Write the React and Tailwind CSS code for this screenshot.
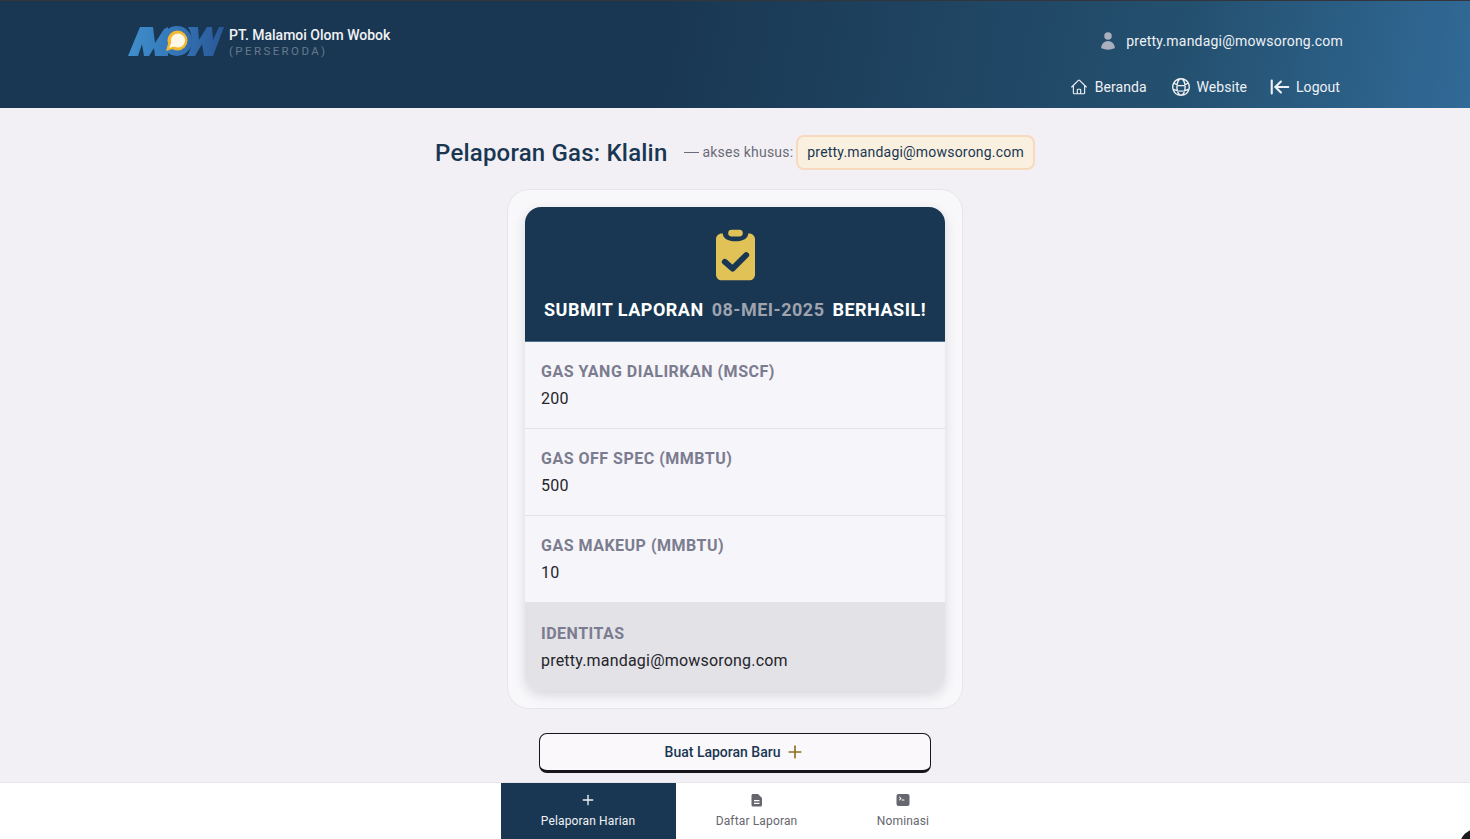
import { ArrowLeftToLine, Plus } from 'lucide-react';
import { HiUser, HiOutlineHome, HiOutlineGlobeAlt, HiCommandLine } from 'react-icons/hi2';

const FIELDS = [
  { label: 'GAS YANG DIALIRKAN (MSCF)', value: '200' },
  { label: 'GAS OFF SPEC (MMBTU)', value: '500' },
  { label: 'GAS MAKEUP (MMBTU)', value: '10' },
];

function MowLogo() {
  return (
    <svg width="96" height="30" viewBox="0 0 96 30" className="shrink-0">
      <defs>
        <linearGradient id="mow" gradientUnits="userSpaceOnUse" x1="0" x2="96" y1="0" y2="0">
          <stop offset="0" stopColor="#3f8fcb" />
          <stop offset="0.5" stopColor="#3476b8" />
          <stop offset="1" stopColor="#2a5796" />
        </linearGradient>
      </defs>
      <path fill="url(#mow)" d="M0 30 L12 1 L25 1 L27 17 L36 3 L40 1 L40 30 L27 30 L26 22 L21 30 L16 30 L14 18 L10 30 Z" />
      <circle cx="49" cy="15" r="15" fill="url(#mow)" />
      <path fill="url(#mow)" d="M60 1 L70 1 L71 14 L79 1 L84 1 L85 14 L91 1 L96 1 L85 30 L76 30 L74 18 L67 30 L59 30 C65 22 65 8 60 1 Z" />
      <circle cx="49.5" cy="14.5" r="10" fill="#f5b82e" />
      <path fill="#f5b82e" d="M38 25 L41 14 L48 22 Z" />
      <circle cx="50" cy="14.5" r="7" fill="#fdf8ea" />
      <path fill="#fdf8ea" d="M41 22 L44 15 L48 20 Z" />
    </svg>
  );
}

function ClipboardCheck() {
  return (
    <svg width="39" height="52" viewBox="0 0 40 52">
      <rect x="12.5" y="0" width="15" height="7" rx="3.5" fill="#e0c257" />
      <path
        fill="#e0c257"
        d="M6 4 H7 C7 9 12 12 20 12 C28 12 33 9 33 4 H34 C37.5 4 40 6.5 40 10 V46 C40 49.5 37.5 52 34 52 H6 C2.5 52 0 49.5 0 46 V10 C0 6.5 2.5 4 6 4 Z"
      />
      <path d="M9 33 L17 40 L31 26" fill="none" stroke="#193752" strokeWidth="6" strokeLinecap="round" strokeLinejoin="round" />
    </svg>
  );
}

function DocIcon() {
  return (
    <svg width="16" height="16" viewBox="0 0 16 16">
      <path
        fill="currentColor"
        fillRule="evenodd"
        d="M4 2 H9 L13 6 V13 C13 13.8 12.4 14.5 11.5 14.5 H4 C3.2 14.5 2.5 13.8 2.5 13 V3.5 C2.5 2.7 3.2 2 4 2 Z M5 8 V9.2 H10.5 V8 Z M5 10.7 V11.9 H10.5 V10.7 Z"
      />
    </svg>
  );
}

export default function App() {
  return (
    <div className="relative h-screen flex flex-col overflow-hidden bg-[#f2f0f4] font-['Roboto',sans-serif]">
      <header className="h-[108px] shrink-0 border-t border-[#33353a] bg-[linear-gradient(100deg,#193752_0%,#193752_45%,#24506f_80%,#316a97_100%)] pl-[128px] pr-[127px] flex justify-between text-white">
        <div className="flex items-start pt-[25px] gap-[5px]">
          <MowLogo />
          <div className="pt-[1px]">
            <div className="text-sm font-medium leading-[17px] text-[#f1f2f5]">PT. Malamoi Olom Wobok</div>
            <div className="text-[11.5px] leading-[14px] tracking-[2.4px] text-[#667a8c]">(PERSERODA)</div>
          </div>
        </div>
        <div className="flex flex-col items-end pt-[30px]">
          <div className="flex items-center gap-[8px] text-sm leading-[20px] tracking-[0.2px] text-[#eef1f5]">
            <HiUser className="w-[20px] h-[20px] text-[#a9afbd]" />
            pretty.mandagi@mowsorong.com
          </div>
          <nav className="flex items-center gap-6 mt-[25px] mr-[3px] text-sm leading-[22px] tracking-[0.05px] text-[#eef1f5]">
            <a className="flex items-center gap-[7px] -mr-[1px]"><HiOutlineHome className="w-[18px] h-[18px]" />Beranda</a>
            <a className="flex items-center gap-[5px]"><HiOutlineGlobeAlt className="w-[22px] h-[22px] stroke-[1.5]" />Website</a>
            <a className="flex items-center gap-[5px]"><ArrowLeftToLine className="w-[22px] h-[22px] -ml-[2px]" strokeWidth={2.3} />Logout</a>
          </nav>
        </div>
      </header>

      <main className="flex-1 min-h-0 flex flex-col items-center pt-[27px]">
        <div className="flex items-center h-[35px]">
          <h1 className="text-2xl font-medium leading-[33px] tracking-[0.2px] text-[#193752] mr-[16px] pt-[2px]">Pelaporan Gas: Klalin</h1>
          <span className="text-sm text-[#6b6c78] mr-[3px] tracking-[0.2px] pb-[2px]">
            <span className="inline-block w-[15px] h-px bg-[#6b6c78] align-middle mr-[4px]" />
            akses khusus:
          </span>
          <span className="h-[35px] flex items-center px-[9px] pb-[2px] rounded-lg border-2 border-[#f7d9bd] bg-[#faf0df] text-sm text-[#193752] tracking-[0.2px]">
            pretty.mandagi@mowsorong.com
          </span>
        </div>

        <div className="mt-[19px] w-[456px] rounded-[22px] border border-[#e6e5ea] bg-[#f8f7fa] p-[17px]">
          <div className="rounded-2xl overflow-hidden shadow-[0_4px_12px_rgba(30,30,50,0.14)] bg-[#f6f5f9]">
            <div className="h-[135px] bg-[#193752] border-b border-[#50708c] flex flex-col items-center pt-[22px]">
              <ClipboardCheck />
              <div className="mt-[17px] flex gap-2 text-lg font-bold leading-[24px] tracking-[0.5px] text-white">
                <span>SUBMIT LAPORAN</span>
                <span className="text-[#9ea3ae]">08-MEI-2025</span>
                <span>BERHASIL!</span>
              </div>
            </div>
            {FIELDS.map(f => (
              <div key={f.label} className="h-[87px] border-b border-[#e2e2e8] px-4 pt-[19px]">
                <div className="text-base font-bold leading-[22px] tracking-[0.5px] text-[#7b7c8f]">{f.label}</div>
                <div className="mt-[5px] text-base leading-[22px] tracking-[0.2px] text-[#25252b]">{f.value}</div>
              </div>
            ))}
            <div className="h-[89px] -mt-px bg-[#e2e2e7] px-4 pt-[21px]">
              <div className="text-base font-bold leading-[22px] tracking-[0.5px] text-[#7b7c8f]">IDENTITAS</div>
              <div className="mt-[5px] text-base leading-[22px] tracking-[0.2px] text-[#25252b]">pretty.mandagi@mowsorong.com</div>
            </div>
          </div>
        </div>

        <button className="mt-[24px] w-[392px] h-[40px] shrink-0 rounded-lg border border-[#15151a] border-b-[3px] bg-[#faf8fb] flex items-center justify-center gap-[5px] text-sm font-medium text-[#193752]">
          Buat Laporan Baru
          <Plus className="w-[20px] h-[20px] text-[#8b7320]" strokeWidth={2} />
        </button>
      </main>

      <footer className="h-[57px] shrink-0 bg-white border-t border-[#e6e5ea] flex justify-center">
        <div className="w-[175px] -ml-[1px] bg-[#193752] text-[#f1f2f5] flex flex-col items-center pt-[9px]">
          <Plus className="w-[16px] h-[16px]" strokeWidth={2} />
          <span className="text-xs leading-[16px] mt-[5px] tracking-[0.15px]">Pelaporan Harian</span>
        </div>
        <div className="w-[162px] text-[#66666f] flex flex-col items-center pt-[9px]">
          <DocIcon />
          <span className="text-xs leading-[16px] mt-[5px] tracking-[0.15px]">Daftar Laporan</span>
        </div>
        <div className="w-[131px] text-[#66666f] flex flex-col items-center pt-[9px]">
          <HiCommandLine className="w-[16px] h-[16px]" />
          <span className="text-xs leading-[16px] mt-[5px] tracking-[0.15px]">Nominasi</span>
        </div>
      </footer>

      <div className="absolute left-[1459px] top-[828px] w-[40px] h-[40px] rounded-full bg-[#1b1b1f]" />
    </div>
  );
}
